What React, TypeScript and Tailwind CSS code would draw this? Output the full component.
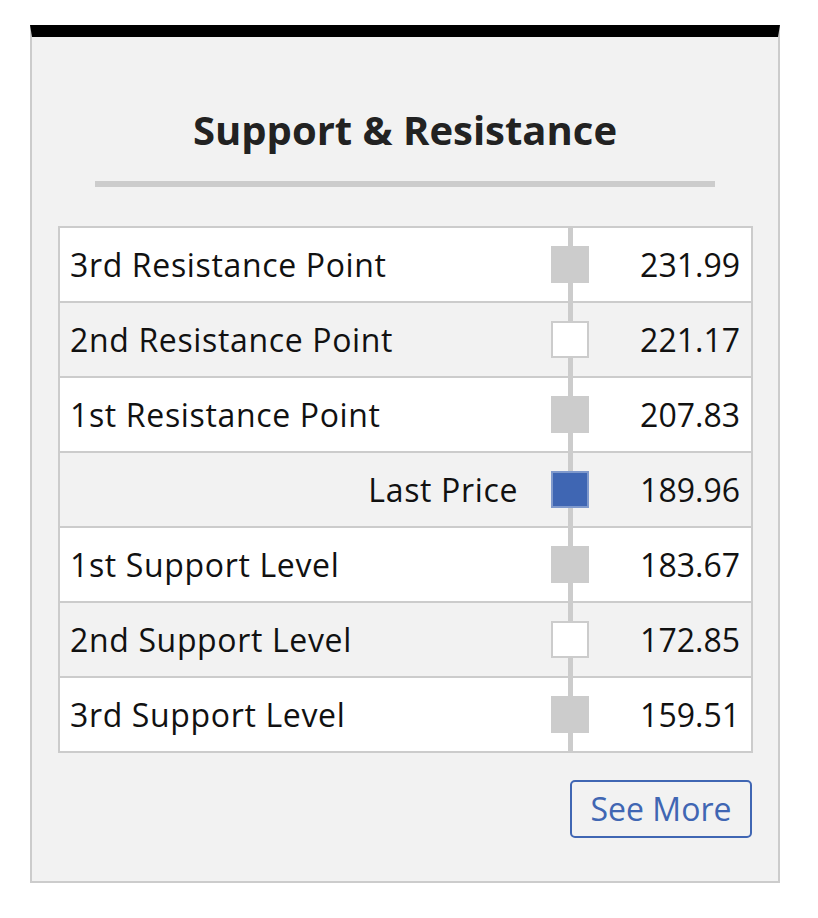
const rows = [
  { label: "3rd Resistance Point", value: "231.99", box: "gray" },
  { label: "2nd Resistance Point", value: "221.17", box: "white" },
  { label: "1st Resistance Point", value: "207.83", box: "gray" },
  { label: "Last Price", value: "189.96", box: "blue" },
  { label: "1st Support Level", value: "183.67", box: "gray" },
  { label: "2nd Support Level", value: "172.85", box: "white" },
  { label: "3rd Support Level", value: "159.51", box: "gray" },
];

function Marker({ kind }: { kind: string }) {
  let cls = "bg-[#cccccc]";
  if (kind === "white") cls = "bg-white border-2 border-[#cccccc]";
  if (kind === "blue") cls = "bg-[#3f66b3] border-2 border-[#7f99cc]";
  return <div className={"relative z-10 w-[38px] h-[37px] " + cls} />;
}

export default function App() {
  return (
    <div className="bg-white min-h-screen pt-[25px] pl-[30px]" style={{ fontFamily: "'Open Sans', sans-serif" }}>
      <div className="w-[750px] bg-[#f2f2f2] border-t-[12px] border-t-black border-x-2 border-b-2 border-x-[#cccccc] border-b-[#cccccc] px-[26px] pb-[43px]">
        <h2 className="pt-[69px] text-center text-[40px] leading-[48px] font-bold text-[#222]">
          Support &amp; Resistance
        </h2>
        <div className="mx-auto mt-[27px] w-[620px] h-[6px] bg-[#cccccc]" />

        <div className="mt-[39px] w-[695px] border-2 border-[#cccccc] text-[32px] text-[#111]">
          {rows.map((r, i) => (
            <div
              key={r.label}
              className={
                "flex items-center h-[73px] " +
                (i > 0 ? "border-t-2 border-[#cccccc] h-[75px] " : "") +
                (i % 2 === 1 ? "bg-[#f2f2f2]" : "bg-white")
              }
            >
              <div
                className={
                  "flex-1 px-[10px] tracking-[0.65px] " + (r.box === "blue" ? "text-right pr-[33px]" : "")
                }
              >
                {r.label}
              </div>
              <div className="relative self-stretch flex items-center w-[38px]">
                <div className="absolute left-[17px] -top-[2px] -bottom-[2px] w-[5px] bg-[#cccccc]" />
                <Marker kind={r.box} />
              </div>
              <div className="w-[162px] text-right pr-[11px]">{r.value}</div>
            </div>
          ))}
        </div>

        <div className="flex justify-end mt-[27px]">
          <button className="w-[182px] h-[58px] border-2 border-[#4066b3] rounded-[5px] text-[#4066b3] text-[32px] bg-transparent">
            See More
          </button>
        </div>
      </div>
    </div>
  );
}
